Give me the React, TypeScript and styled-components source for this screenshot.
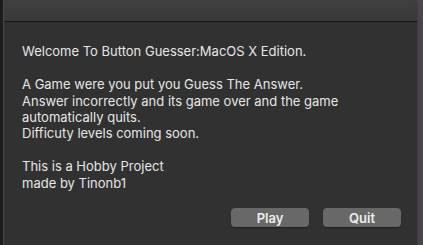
import React from "react";
import styled, { createGlobalStyle } from "styled-components";

const Global = createGlobalStyle`
  html, body { margin: 0; padding: 0; background: #1f1f22; }
  body { width: 423px; height: 245px; overflow: hidden; }
`;

const Screen = styled.div`
  width: 423px;
  height: 245px;
  display: flex;
  background: linear-gradient(90deg, #1c1c1e 0, #1c1c1e 3px, transparent 3px),
    #4a4452;
`;

const Window = styled.div`
  margin-left: 3px;
  width: 415px;
  height: 245px;
  display: flex;
  flex-direction: column;
  background: #313131;
  border-left: 1px solid #4a4a4a;
  border-right: 1px solid #3c3c3c;
  border-top-left-radius: 5px;
  border-top-right-radius: 5px;
  box-sizing: border-box;
  font-family: "Inter", "Liberation Sans", sans-serif;
`;

const TitleBar = styled.div`
  height: 21px;
  flex: none;
  background: linear-gradient(#404040, #383838);
  border-bottom: 1px solid #151515;
  border-top-left-radius: 5px;
  border-top-right-radius: 5px;
`;

const Body = styled.div`
  flex: 1;
  display: flex;
  flex-direction: column;
  padding: 21px 0 0 18px;
`;

const Para = styled.p`
  margin: 0 0 17px 0;
  color: #e6e6e6;
  font-size: 13px;
  line-height: 16.3px;
`;

const Buttons = styled.div`
  margin-top: auto;
  margin-bottom: 20px;
  display: flex;
  justify-content: flex-end;
  gap: 14px;
  padding-right: 16px;
`;

const Button = styled.button`
  width: 78px;
  height: 19px;
  border: none;
  border-radius: 4px;
  background: #686868;
  color: #ededed;
  font-family: "Inter", "Liberation Sans", sans-serif;
  font-size: 13px;
  font-weight: 600;
  padding: 0;
  box-shadow: 0 0.5px 1px rgba(0, 0, 0, 0.4);
`;

export default function App() {
  return (
    <>
      <Global />
      <Screen>
        <Window>
          <TitleBar />
          <Body>
            <Para>Welcome To Button Guesser:MacOS X Edition.</Para>
            <Para>
              A Game were you put you Guess The Answer.
              <br />
              Answer incorrectly and its game over and the game
              <br />
              automatically quits.
              <br />
              Difficuty levels coming soon.
            </Para>
            <Para>
              This is a Hobby Project
              <br />
              made by Tinonb1
            </Para>
            <Buttons>
              <Button>Play</Button>
              <Button>Quit</Button>
            </Buttons>
          </Body>
        </Window>
      </Screen>
    </>
  );
}
